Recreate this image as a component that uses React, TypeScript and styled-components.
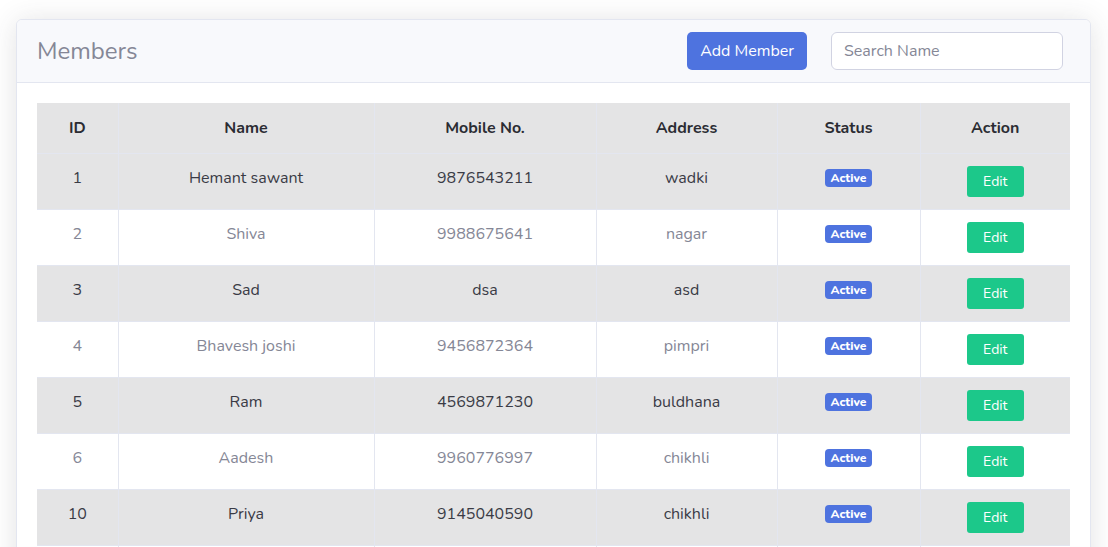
import React from 'react';
import styled, { createGlobalStyle } from 'styled-components';

const GlobalStyle = createGlobalStyle`
  body {
    margin: 0;
    background: #ffffff;
    font-family: "Nunito", "Lato", "Noto Sans", sans-serif;
    color: #858796;
  }
`;

const Page = styled.div`
  padding: 19px 17px 0 16px;
`;

const Card = styled.div`
  background: #fff;
  border: 1px solid #e3e6f0;
  border-radius: 6px;
  box-shadow: 0 0.15rem 1.75rem 0 rgba(58, 59, 69, 0.15);
  overflow: hidden;
`;

const CardHeader = styled.div`
  display: flex;
  align-items: center;
  background: #f8f9fc;
  border-bottom: 1px solid #e3e6f0;
  padding: 12px 27px 12px 20px;
`;

const Title = styled.h4`
  flex: 1;
  margin: 0;
  font-size: 24px;
  font-weight: 400;
  color: #858796;
`;

const PrimaryButton = styled.button`
  height: 38px;
  padding: 0 13px;
  border: none;
  border-radius: 5px;
  background: #4e73df;
  color: #fff;
  font-family: inherit;
  font-size: 16px;
`;

const SearchInput = styled.input`
  margin-left: 24px;
  width: 232px;
  height: 38px;
  box-sizing: border-box;
  padding: 0 12px;
  border: 1px solid #d1d3e2;
  border-radius: 6px;
  font-family: inherit;
  font-size: 16px;
  color: #6e707e;

  &::placeholder {
    color: #858796;
  }
`;

const CardBody = styled.div`
  padding: 20px;
`;

const Table = styled.table`
  width: 100%;
  border-collapse: collapse;
  table-layout: fixed;
`;

const HeadCell = styled.th<{ $w: number }>`
  box-sizing: border-box;
  width: ${(p) => p.$w}px;
  height: 50px;
  padding: 0 12px;
  background: #e4e4e5;
  border-left: 1px solid #e3e6f0;
  border-bottom: 1px solid #e3e6f0;
  font-size: 16px;
  font-weight: 700;
  color: #2b2c33;
  text-align: center;

  &:first-child {
    border-left: none;
  }
`;

const Row = styled.tr<{ $striped: boolean }>`
  background: ${(p) => (p.$striped ? '#e4e4e5' : '#ffffff')};
  color: ${(p) => (p.$striped ? '#3a3b45' : '#858796')};
`;

const Cell = styled.td`
  padding: 12px;
  height: 31px;
  vertical-align: top;
  text-align: center;
  font-size: 16px;
  font-weight: 400;
  line-height: 24px;
  border-left: 1px solid #e3e6f0;
  border-bottom: 1px solid #e3e6f0;

  &:first-child {
    border-left: none;
  }
`;

const Badge = styled.span`
  display: inline-block;
  padding: 3px 6px;
  border-radius: 4px;
  background: #4e73df;
  color: #fff;
  font-size: 12px;
  font-weight: 800;
  line-height: 12px;
  vertical-align: 1px;
`;

const EditButton = styled.button`
  width: 57px;
  height: 31px;
  padding: 0;
  border: none;
  border-radius: 3px;
  background: #1cc88a;
  color: #fff;
  font-family: inherit;
  font-size: 14px;
`;

const columns = [
  { label: 'ID', w: 81 },
  { label: 'Name', w: 256 },
  { label: 'Mobile No.', w: 222 },
  { label: 'Address', w: 181 },
  { label: 'Status', w: 143 },
  { label: 'Action', w: 150 },
];

const members = [
  { id: 1, name: 'Hemant sawant', mobile: '9876543211', address: 'wadki' },
  { id: 2, name: 'Shiva', mobile: '9988675641', address: 'nagar' },
  { id: 3, name: 'Sad', mobile: 'dsa', address: 'asd' },
  { id: 4, name: 'Bhavesh joshi', mobile: '9456872364', address: 'pimpri' },
  { id: 5, name: 'Ram', mobile: '4569871230', address: 'buldhana' },
  { id: 6, name: 'Aadesh', mobile: '9960776997', address: 'chikhli' },
  { id: 10, name: 'Priya', mobile: '9145040590', address: 'chikhli' },
  { id: 11, name: 'Sagar', mobile: '9876501234', address: 'pune' },
];

export default function App() {
  return (
    <Page>
      <GlobalStyle />
      <Card>
        <CardHeader>
          <Title>Members</Title>
          <PrimaryButton>Add Member</PrimaryButton>
          <SearchInput placeholder="Search Name" />
        </CardHeader>
        <CardBody>
          <Table>
            <thead>
              <tr>
                {columns.map((c) => (
                  <HeadCell key={c.label} $w={c.w}>
                    {c.label}
                  </HeadCell>
                ))}
              </tr>
            </thead>
            <tbody>
              {members.map((m, i) => (
                <Row key={m.id} $striped={i % 2 === 0}>
                  <Cell>{m.id}</Cell>
                  <Cell>{m.name}</Cell>
                  <Cell>{m.mobile}</Cell>
                  <Cell>{m.address}</Cell>
                  <Cell>
                    <Badge>Active</Badge>
                  </Cell>
                  <Cell>
                    <EditButton>Edit</EditButton>
                  </Cell>
                </Row>
              ))}
            </tbody>
          </Table>
        </CardBody>
      </Card>
    </Page>
  );
}
